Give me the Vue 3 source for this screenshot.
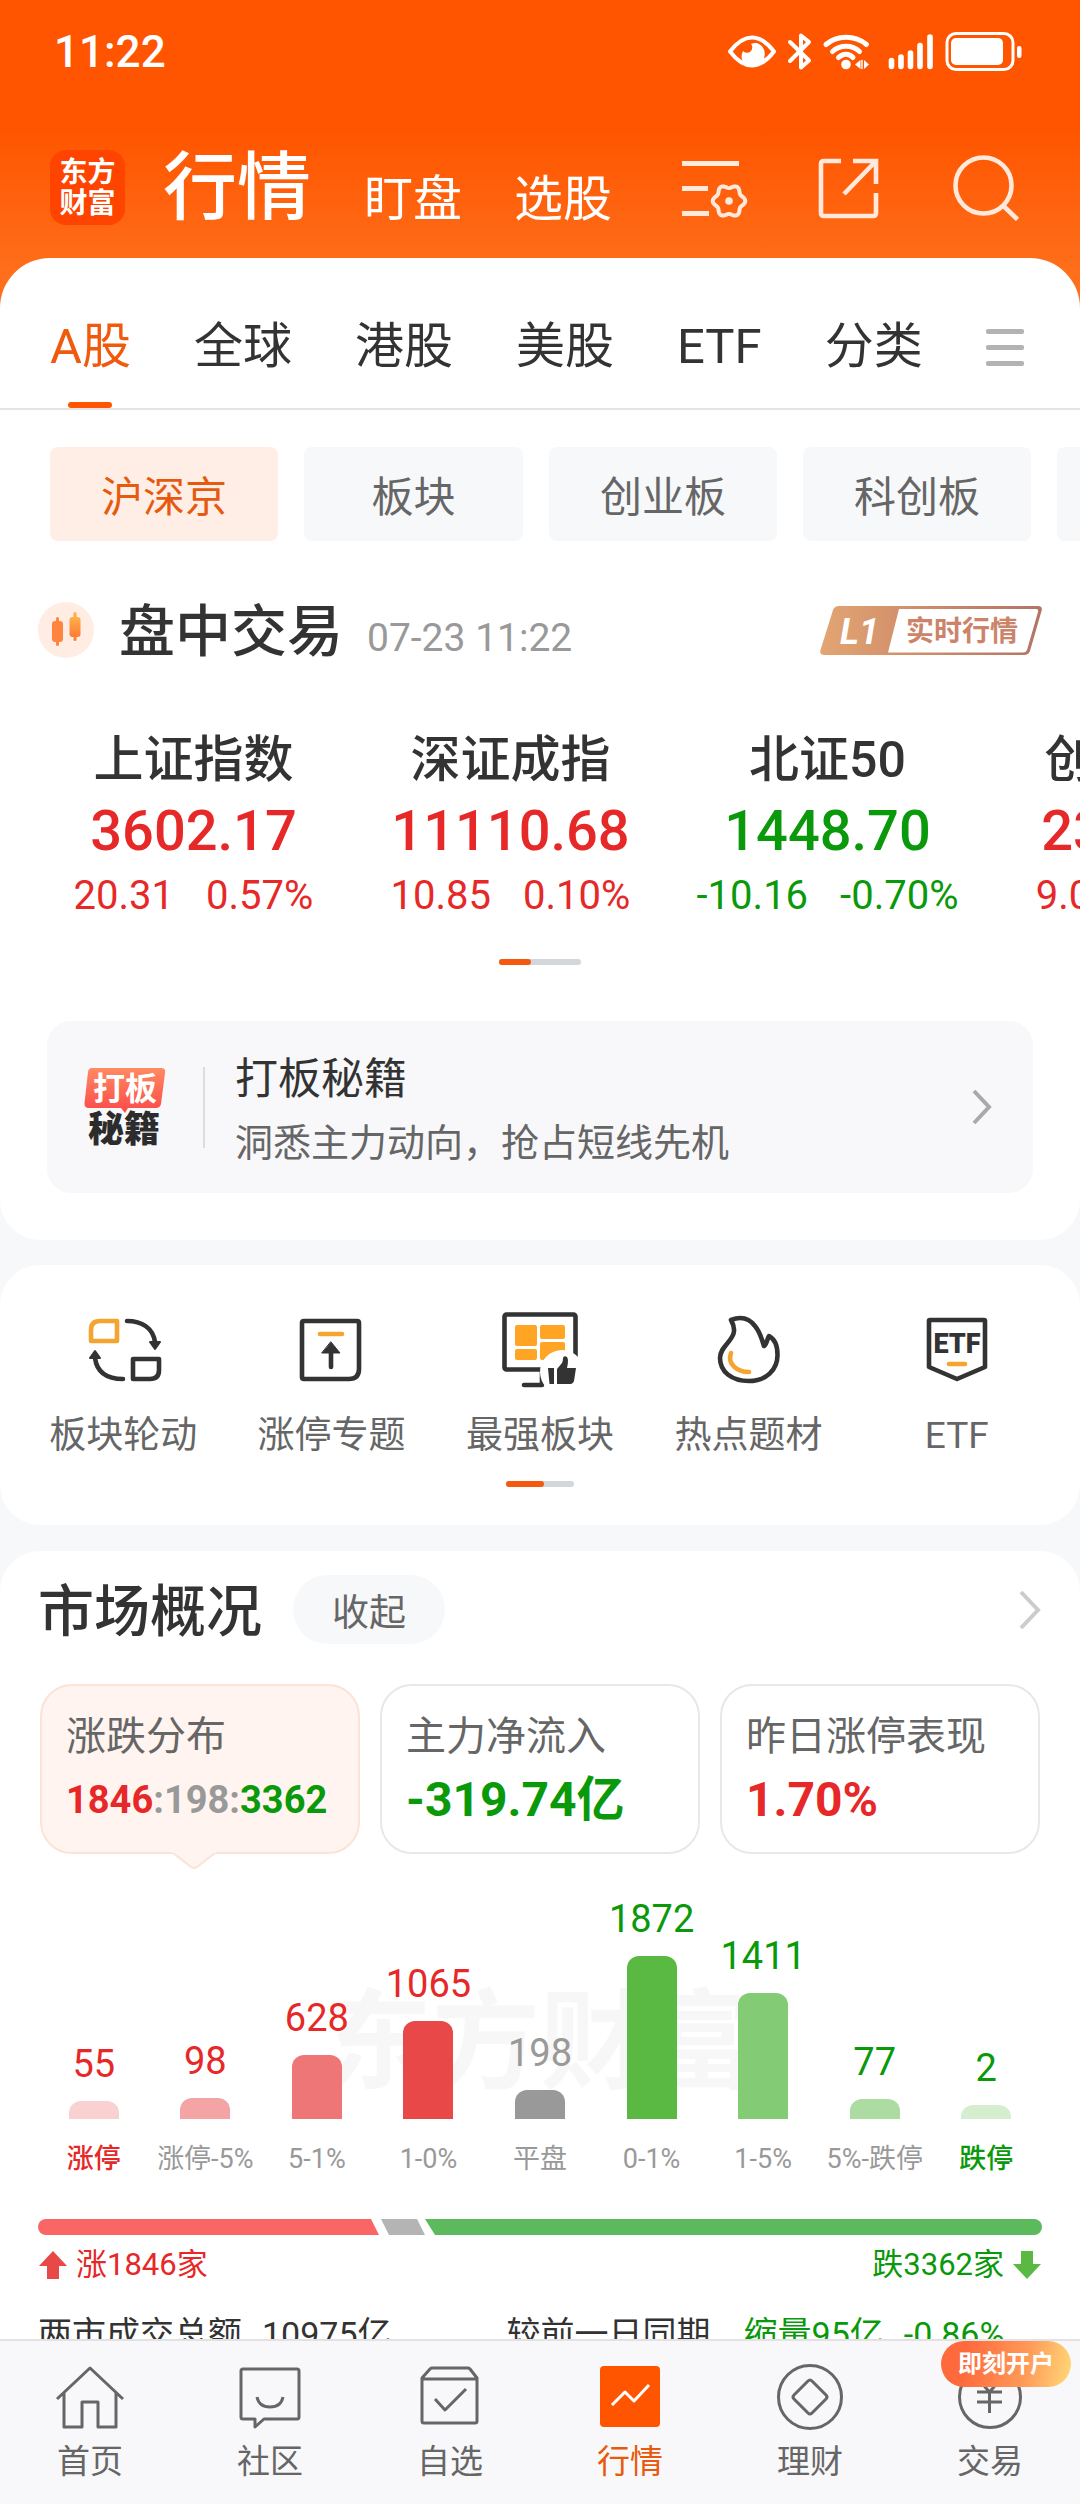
<script setup>
import { ref } from 'vue'

const tabs = ['A股', '全球', '港股', '美股', 'ETF', '分类']
const activeTab = ref('A股')

const boards = ['沪深京', '板块', '创业板', '科创板', '北交所']
const activeBoard = ref('沪深京')

const indices = [
  { name: '上证指数', value: '3602.17', diff: '20.31', pct: '0.57%', dir: 'up' },
  { name: '深证成指', value: '11110.68', diff: '10.85', pct: '0.10%', dir: 'up' },
  { name: '北证50', value: '1448.70', diff: '-10.16', pct: '-0.70%', dir: 'down' },
  { name: '创业板指', value: '2319.92', diff: '9.05', pct: '0.39%', dir: 'up' },
]

const shortcuts = [
  { id: 'rotate', label: '板块轮动' },
  { id: 'limit', label: '涨停专题' },
  { id: 'strong', label: '最强板块' },
  { id: 'hot', label: '热点题材' },
  { id: 'etf', label: 'ETF' },
]

const bars = [
  { label: '涨停', count: 55, height: 18, color: '#f9d1d1', tone: 'up', strong: true },
  { label: '涨停-5%', count: 98, height: 21, color: '#f4a4a4', tone: 'up' },
  { label: '5-1%', count: 628, height: 64, color: '#ee7676', tone: 'up' },
  { label: '1-0%', count: 1065, height: 98, color: '#e84848', tone: 'up' },
  { label: '平盘', count: 198, height: 29, color: '#999999', tone: 'flat' },
  { label: '0-1%', count: 1872, height: 163, color: '#5ab943', tone: 'down' },
  { label: '1-5%', count: 1411, height: 126, color: '#83cb75', tone: 'down' },
  { label: '5%-跌停', count: 77, height: 20, color: '#acdca1', tone: 'down' },
  { label: '跌停', count: 2, height: 14, color: '#d5eed0', tone: 'down', strong: true },
]

const navItems = [
  { id: 'home', label: '首页' },
  { id: 'community', label: '社区' },
  { id: 'watch', label: '自选' },
  { id: 'market', label: '行情' },
  { id: 'wealth', label: '理财' },
  { id: 'trade', label: '交易' },
]
const activeNav = ref('market')

// Six-lobed gear outline centred on (cx, cy)
function gearPath(cx, cy, radius, wave) {
  const points = []
  for (let a = 0; a < 360; a += 6) {
    const t = (a * Math.PI) / 180
    const r = radius + wave * Math.cos(6 * t)
    points.push(`${(cx + r * Math.cos(t)).toFixed(2)} ${(cy + r * Math.sin(t)).toFixed(2)}`)
  }
  return `M${points.join('L')}Z`
}
const gear = gearPath(47, 46, 14.6, 1.7)
</script>

<template>
  <div class="app">
    <header class="header">
      <div class="status">
        <span class="time">11:22</span>
        <svg class="status-icons" width="294" height="40" viewBox="0 0 294 40" fill="none" stroke="#fff" stroke-linecap="round" stroke-linejoin="round" aria-hidden="true">
          <path d="M2 19.5C10 9 17 5.500 24 5.500S38 9 46 19.500C38 30 31 33.500 24 33.500S10 30 2 19.500Z" stroke-width="4" />
          <path d="M15 19a5 5 0 0 0 8-7 10 10 0 0 1 6-1 12 12 0 0 1 1 22H17A12 12 0 0 1 15 19Z" fill="#fff" stroke="none" />
          <path d="M62 10L81 28.500L73 35.500V3.500L81 10L62 29" stroke-width="4" />
          <path d="M98 12.500C109 2.800 127 2.800 138.500 12.500M104.500 19.500C112 12.500 124 12.500 131.500 19.500M110.500 25.500C115 21 121 21 125 25.500" stroke-width="5" />
          <circle cx="118" cy="32.500" r="4.800" fill="#fff" stroke="none" />
          <path d="M127 32.500L132.500 28V37ZM141 32.500L136 28V37Z" fill="#fff" stroke="none" />
          <path d="M134 28.500V36.500" stroke-width="1.500" />
          <path d="M163.500 28.500V34.500M173 25V34.500M182.500 21V34.500M192 13.500V34.500M202 5V34.500" stroke-width="5.600" />
          <rect x="219" y="1.500" width="66" height="36" rx="9" stroke-width="3" />
          <rect x="223" y="6" width="52" height="27" rx="5" fill="#fff" stroke="none" />
          <rect x="289" y="14" width="4.500" height="12" rx="2.200" fill="#fff" stroke="none" />
        </svg>
      </div>
      <div class="topbar">
        <div class="logo"><span>东方</span><span>财富</span></div>
        <h1 class="page-title">行情</h1>
        <nav class="top-links">
          <a href="#watch">盯盘</a>
          <a href="#pick">选股</a>
        </nav>
        <div class="actions">
          <button type="button" aria-label="列表设置">
            <svg width="68" height="66" viewBox="-2 0 68 66" fill="none" stroke="#ffe8dc" stroke-width="4.800">
              <path d="M0 8.500H57M0 33.500H26M0 58.500H27" />
              <path :d="gear" stroke-width="4" stroke-linejoin="round" />
              <circle cx="47" cy="46" r="3.800" fill="#ffe8dc" stroke="none" />
            </svg>
          </button>
          <button type="button" aria-label="分享">
            <svg width="68" height="66" viewBox="0 0 68 66" fill="none" stroke="#ffe8dc" stroke-width="4.600">
              <path d="M25 6H7.500a2.500 2.500 0 0 0-2.500 2.500V58.500a2.500 2.500 0 0 0 2.500 2.500H57.500a2.500 2.500 0 0 0 2.500-2.500V38" />
              <path d="M37 6H60V29M60 6L28 39" />
            </svg>
          </button>
          <button type="button" aria-label="搜索">
            <svg width="68" height="66" viewBox="0 0 68 66" fill="none" stroke="#ffe8dc" stroke-width="4.600">
              <circle cx="31.500" cy="30.500" r="28" />
              <path d="M51 50.500L65.500 64.500" />
            </svg>
          </button>
        </div>
      </div>
    </header>

    <main class="content">
      <section class="sheet">
        <nav class="tabs">
          <button v-for="t in tabs" :key="t" type="button" class="tab" :class="{ active: t === activeTab }" @click="activeTab = t">{{ t }}</button>
          <button type="button" class="menu" aria-label="更多分类"><i></i><i></i><i></i></button>
        </nav>

        <div class="chips">
          <button v-for="b in boards" :key="b" type="button" class="chip" :class="{ active: b === activeBoard }" @click="activeBoard = b">{{ b }}</button>
        </div>

        <div class="session">
          <svg width="56" height="56" viewBox="0 0 56 56" aria-hidden="true">
            <defs>
              <linearGradient id="candle" x1="0" y1="0" x2="0" y2="1">
                <stop offset="0" stop-color="#ffb04a" />
                <stop offset="1" stop-color="#ff7a35" />
              </linearGradient>
            </defs>
            <circle cx="28" cy="28" r="28" fill="#ffece3" />
            <g fill="#ff8440">
              <rect x="18" y="15" width="3" height="29" rx="1.500" />
              <rect x="14" y="19" width="11" height="21" rx="3" />
            </g>
            <g fill="url(#candle)">
              <rect x="35.500" y="10" width="3" height="29" rx="1.500" />
              <rect x="31.500" y="15" width="11" height="20" rx="3" />
            </g>
          </svg>
          <h2 class="heading">盘中交易</h2>
          <time class="date">07-23 11:22</time>
          <a href="#level1" class="level">
            <svg width="222" height="51" viewBox="0 0 222 51">
              <defs>
                <linearGradient id="bronze" x1="0" y1="0" x2="1" y2="0">
                  <stop offset="0" stop-color="#e3a573" />
                  <stop offset="0.400" stop-color="#d18f6b" />
                  <stop offset="1" stop-color="#b27466" />
                </linearGradient>
              </defs>
              <path d="M19 1H218Q223 1 221.500 6L210 46Q208.500 50 204 50H5Q-1 50 .5 45L13 5Q14.500 1 19 1Z" fill="url(#bronze)" />
              <path d="M79 4H216Q219 4 218 7L207 45Q206 47.500 203 47.500H68Z" fill="#fff" />
              <text x="20" y="39" class="level-mark">L1</text>
              <text x="86" y="36" class="level-text">实时行情</text>
            </svg>
          </a>
        </div>

        <div class="indices">
          <a v-for="i in indices" :key="i.name" href="#index" class="index" :class="i.dir">
            <span class="index-name">{{ i.name }}</span>
            <span class="index-value">{{ i.value }}</span>
            <span class="index-change"><span>{{ i.diff }}</span><span>{{ i.pct }}</span></span>
          </a>
        </div>
        <div class="pager pager-wide"><i></i></div>

        <a href="#guide" class="promo">
          <svg width="84" height="80" viewBox="0 0 84 80">
            <defs>
              <linearGradient id="promo" x1="0" y1="0" x2="0" y2="1">
                <stop offset="0" stop-color="#ff8a63" />
                <stop offset="1" stop-color="#fb4a48" />
              </linearGradient>
            </defs>
            <path d="M8 1H77Q82 1 81 6L77 37Q76 41 72 41H44L41 46L37 41H5Q0 41 .5 36L4 5Q4.500 1 8 1Z" fill="url(#promo)" />
            <text x="9" y="33" class="promo-top">打板</text>
            <text x="4" y="75" class="promo-bottom">秘籍</text>
          </svg>
          <span class="promo-body">
            <strong>打板秘籍</strong>
            <span>洞悉主力动向，抢占短线先机</span>
          </span>
          <svg class="chevron" width="22" height="38" viewBox="0 0 22 38" fill="none" stroke="#a9a9a9" stroke-width="4"><path d="M3 3L18 19L3 35" /></svg>
        </a>
      </section>

      <section class="card shortcuts-card">
        <div class="shortcuts">
          <a v-for="s in shortcuts" :key="s.id" href="#shortcut" class="shortcut">
            <svg width="84" height="84" viewBox="0 0 84 84" fill="none" stroke="#333" stroke-width="4.600" stroke-linecap="round" stroke-linejoin="round">
              <g v-if="s.id === 'rotate'">
                <path d="M10 33V22Q10 13 19 13H36V33Z" stroke="#f5a52f" />
                <path d="M52 51H78V62Q78 71 69 71H52Z" />
                <path d="M46 13C61 13 72 20 74 34M42 71C27 71 16 65 14 50" />
                <path d="M69 34H79L74 41ZM9 50H19L14 43Z" fill="#333" stroke-width="2" />
              </g>
              <g v-else-if="s.id === 'limit'">
                <path d="M14 13H67Q69 13 69 15V61Q69 71 59 71H14Q12 71 12 69V15Q12 13 14 13Z" />
                <path d="M30 26H52" stroke="#f5a52f" />
                <path d="M41 59V42" />
                <path d="M41 34L50 45H32Z" fill="#333" stroke-width="1" />
              </g>
              <g v-else-if="s.id === 'strong'">
                <rect x="6.500" y="6.500" width="71" height="55" rx="2" />
                <g fill="#ffa423" stroke="none">
                  <rect x="17" y="17" width="22" height="21" rx="2" />
                  <rect x="42" y="17" width="25" height="14" rx="2" />
                  <rect x="17" y="41" width="22" height="11" rx="2" />
                  <rect x="42" y="34" width="25" height="18" rx="2" />
                </g>
                <path d="M26 77H44V63" />
                <circle cx="64" cy="64" r="22" fill="#fff" stroke="none" />
                <path d="M50 60H56V76H51.500ZM59 61L64 55Q65 53 65 50Q66 47 69 49Q71 52 69 60H78L76 73Q75 76 73 76H59Z" fill="#333" stroke="none" />
              </g>
              <g v-else-if="s.id === 'hot'">
                <path d="M25 12C35 8 43 10 49 18C54 24 56 31 58 38C61 36 61 31 63 28C69 31 71.500 39 71.500 47C71.500 62 60 73 43 73C26 73 14 64 14 50C14 35 36 31 25 12Z" />
                <path d="M25 45C21 56 31 64 43 64" stroke="#f5a52f" />
              </g>
              <g v-else>
                <path d="M15 12H69Q70 12 70 13V59L42 71L14 59V13Q14 12 15 12Z" />
                <path d="M34 56H50" stroke="#f5a52f" />
                <text x="42" y="45" class="etf-text">ETF</text>
              </g>
            </svg>
            <span>{{ s.label }}</span>
          </a>
        </div>
        <div class="pager"><i></i></div>
      </section>

      <section class="card market">
        <div class="market-head">
          <h2 class="heading">市场概况</h2>
          <button type="button" class="collapse">收起</button>
          <a href="#market" class="more" aria-label="更多">
            <svg width="24" height="42" viewBox="0 0 24 42" fill="none" stroke="#ccc" stroke-width="4"><path d="M3 3L20 21L3 39" /></svg>
          </a>
        </div>

        <div class="stats">
          <button type="button" class="stat selected">
            <span class="stat-label">涨跌分布</span>
            <span class="ratio"><b class="up">1846</b><b class="flat">:198:</b><b class="down">3362</b></span>
            <svg class="pointer" width="44" height="18" viewBox="0 0 44 18"><path d="M1 1L19 15Q22 17 25 15L43 1" fill="#fff4ef" stroke="#fbe3d7" stroke-width="2" /><path d="M0 0H44V1H0Z" fill="#fff4ef" /></svg>
          </button>
          <button type="button" class="stat">
            <span class="stat-label">主力净流入</span>
            <span class="stat-value down">-319.74亿</span>
          </button>
          <button type="button" class="stat">
            <span class="stat-label">昨日涨停表现</span>
            <span class="stat-value up">1.70%</span>
          </button>
        </div>

        <div class="chart">
          <div class="watermark" aria-hidden="true">东方财富</div>
          <div v-for="b in bars" :key="b.label" class="column">
            <span class="count" :class="b.tone">{{ b.count }}</span>
            <span class="bar" :style="{ height: b.height + 'px', background: b.color }"></span>
          </div>
        </div>
        <div class="axis">
          <span v-for="b in bars" :key="b.label" :class="b.strong ? ['strong', b.tone] : ''">{{ b.label }}</span>
        </div>

        <div class="breadth"><i class="rise"></i><i class="even"></i><i class="fall"></i></div>
        <div class="legend">
          <span class="up">
            <svg width="28" height="28" viewBox="0 0 28 28" fill="#e84848"><path d="M14 0L28 15H20V28H8V15H0Z" /></svg>涨1846家
          </span>
          <span class="down">
            跌3362家<svg width="28" height="28" viewBox="0 0 28 28" fill="#5ab943"><path d="M14 28L28 13H20V0H8V13H0Z" /></svg>
          </span>
        </div>

        <div class="turnover">
          <div class="pair"><span>两市成交总额</span><span>10975亿</span></div>
          <div class="pair compare"><span>较前一日同期</span><span class="down pair"><span>缩量95亿</span><span>-0.86%</span></span></div>
        </div>
      </section>
    </main>

    <nav class="bottom-nav">
      <a v-for="n in navItems" :key="n.id" href="#nav" class="nav-item" :class="{ active: n.id === activeNav }" @click.prevent="activeNav = n.id">
        <svg width="72" height="72" viewBox="0 0 72 72" fill="none" stroke="#666" stroke-width="3" stroke-linejoin="round">
          <path v-if="n.id === 'home'" d="M3 38L36 7L69 38M10 32V66H28V41H44V66H62V32" />
          <g v-else-if="n.id === 'community'">
            <path d="M9 8H63Q65 8 65 10V56Q65 58 63 58H30L21 66V58H9Q7 58 7 56V10Q7 8 9 8Z" />
            <path d="M23 36Q25 46 36 46T49 36" />
          </g>
          <g v-else-if="n.id === 'watch'">
            <path d="M8 17L16 8Q17 7 18 7H54Q55 7 56 8L63 17V60Q63 62 61 62H10Q8 62 8 60ZM8 18H63" />
            <path d="M21 38L31 49L52 28" />
          </g>
          <g v-else-if="n.id === 'market'">
            <rect x="6" y="5" width="60" height="61" rx="4" fill="#ff5500" stroke="none" />
            <path d="M18 44L31 31L40 40L55 24" stroke="#fff" />
          </g>
          <g v-else-if="n.id === 'wealth'">
            <circle cx="36" cy="36" r="31.500" />
            <path d="M34 20Q36 18 38 20L52 34Q54 36 52 38L38 52Q36 54 34 52L20 38Q18 36 20 34Z" />
          </g>
          <g v-else>
            <circle cx="36" cy="36" r="30.500" />
            <path d="M25 19L35.500 31L46 19M23 31H48M23 41H48M35.500 31V52" />
          </g>
        </svg>
        <span>{{ n.label }}</span>
        <em v-if="n.id === 'trade'" class="promo-tag">即刻开户</em>
      </a>
    </nav>
  </div>
</template>

<style>
body {
  margin: 0;
  background: #f7f8fa;
}
</style>

<style scoped>
.app {
  font-family: Roboto, 'Noto Sans CJK SC', sans-serif;
  color: #333;
  overflow: hidden;
}
.app * {
  box-sizing: border-box;
}
button {
  font: inherit;
  color: inherit;
  border: 0;
  padding: 0;
  background: none;
}
a {
  color: inherit;
  text-decoration: none;
}
svg {
  display: block;
  flex: none;
}
h1,
h2 {
  margin: 0;
}
.up {
  color: #e62828;
}
.down {
  color: #0a990a;
}
.flat {
  color: #999;
}

.header {
  padding-bottom: 83px;
  background: linear-gradient(#ff5500 130px, #ff6e1a 270px);
  color: #fff;
}
.status {
  display: flex;
  align-items: center;
  justify-content: space-between;
  height: 104px;
  padding: 0 58px 0 54px;
}
.time {
  font-size: 44px;
  font-weight: 500;
}
.topbar {
  display: flex;
  align-items: center;
  height: 75px;
  margin-top: 46px;
  padding: 0 60px 0 50px;
}
.logo {
  display: flex;
  flex-direction: column;
  align-items: center;
  justify-content: center;
  width: 75px;
  height: 75px;
  border-radius: 16px;
  background: #ff4400;
  font-size: 28px;
  font-weight: 700;
  line-height: 31px;
}
.page-title {
  margin-left: 38px;
  font-size: 74px;
  font-weight: 500;
  line-height: 78px;
}
.top-links {
  display: flex;
  gap: 52px;
  margin-left: 53px;
  padding-top: 24px;
  font-size: 49px;
  line-height: 53px;
}
.actions {
  display: flex;
  gap: 68px;
  margin-left: auto;
}

.sheet {
  margin-top: -50px;
  padding-bottom: 47px;
  border-radius: 50px 50px 40px 40px;
  background: #fff;
  overflow: hidden;
}
.tabs {
  display: flex;
  align-items: center;
  gap: 63px;
  padding: 54px 56px 26px 50px;
  border-bottom: 2px solid #e4e4e4;
}
.tab {
  position: relative;
  flex: none;
  font-size: 49px;
  line-height: 70px;
  white-space: nowrap;
}
.tab.active {
  color: #f05a0c;
}
.tab.active::after {
  content: '';
  position: absolute;
  left: 50%;
  bottom: -26px;
  width: 44px;
  height: 6px;
  margin-left: -22px;
  border-radius: 3px;
  background: #ff5500;
}
.menu {
  display: flex;
  flex: none;
  flex-direction: column;
  gap: 11px;
  margin-left: auto;
}
.menu i {
  width: 38px;
  height: 5px;
  border-radius: 2px;
  background: #b3b3b3;
}

.chips {
  display: flex;
  gap: 26px;
  margin-top: 37px;
  padding-left: 50px;
  overflow: hidden;
}
.chip {
  flex: none;
  min-width: 219px;
  height: 94px;
  padding: 0 51px 2px;
  border-radius: 8px;
  background: #f7f8fa;
  color: #666;
  font-size: 42px;
  white-space: nowrap;
}
.chip.active {
  background: #ffeee6;
  color: #e65a10;
}

.session {
  display: flex;
  align-items: center;
  height: 56px;
  margin-top: 61px;
  padding: 0 38px;
}
.heading {
  padding-top: 4px;
  font-size: 56px;
  font-weight: 500;
  line-height: 56px;
}
.session .heading {
  margin-left: 25px;
}
.date {
  margin-left: 24px;
  padding-top: 16px;
  color: #999;
  font-size: 39px;
  line-height: 40px;
}
.level {
  margin-left: auto;
}
.level-mark {
  fill: #fff;
  font-size: 36px;
  font-style: italic;
  font-weight: 700;
}
.level-text {
  fill: #cb8469;
  font-size: 28px;
  font-weight: 700;
}

.indices {
  display: flex;
  margin-top: 72px;
  padding-left: 35px;
  overflow: hidden;
}
.index {
  display: flex;
  flex: 0 0 317px;
  flex-direction: column;
  align-items: center;
}
.index-name {
  color: #333;
  font-size: 50px;
  font-weight: 500;
  line-height: 60px;
}
.index-value {
  margin-top: 11px;
  font-size: 56px;
  font-weight: 500;
  line-height: 60px;
}
.index-change {
  display: flex;
  gap: 32px;
  margin-top: 10px;
  font-size: 40px;
  line-height: 50px;
}
.pager {
  width: 68px;
  height: 6px;
  margin: 20px auto 0;
  border-radius: 3px;
  background: #d3d6da;
}
.pager i {
  display: block;
  width: 38px;
  height: 6px;
  border-radius: 3px;
  background: #f5590f;
}
.pager-wide {
  width: 82px;
  margin-top: 38px;
}
.pager-wide i {
  width: 32px;
}

.promo {
  display: flex;
  align-items: center;
  height: 172px;
  margin: 56px 47px 0;
  padding: 0 40px 0 37px;
  border-radius: 24px;
  background: #f8f8fa;
}
.promo-top {
  fill: #fff;
  font-size: 32px;
  font-weight: 700;
}
.promo-bottom {
  fill: #2c2c2c;
  font-size: 36px;
  font-weight: 900;
}
.promo-body {
  display: flex;
  flex-direction: column;
  justify-content: center;
  gap: 8px;
  height: 81px;
  margin-left: 35px;
  padding-top: 8px;
  padding-left: 30px;
  border-left: 2px solid #dcdcdc;
}
.promo-body strong {
  font-size: 43px;
  font-weight: 400;
  line-height: 56px;
}
.promo-body span {
  color: #666;
  font-size: 38px;
  line-height: 56px;
}
.chevron {
  margin-left: auto;
}

.card {
  border-radius: 40px;
  background: #fff;
}
.shortcuts-card {
  margin-top: 25px;
  padding: 43px 0 38px;
}
.shortcuts {
  display: flex;
  padding: 0 19px;
}
.shortcut {
  display: flex;
  flex: 1;
  flex-direction: column;
  align-items: center;
  gap: 19px;
  color: #666;
  font-size: 37px;
  line-height: 50px;
}
.etf-text {
  fill: #333;
  stroke: none;
  font-size: 27px;
  font-weight: 900;
  text-anchor: middle;
}

.market {
  margin-top: 26px;
  padding: 24px 38px 144px;
  border-radius: 40px 40px 0 0;
}
.market-head {
  display: flex;
  align-items: center;
  height: 69px;
}
.collapse {
  width: 152px;
  height: 69px;
  margin-left: 31px;
  border-radius: 35px;
  background: #f7f8fa;
  color: #666;
  font-size: 37px;
}
.more {
  margin-left: auto;
}
.stats {
  display: grid;
  grid-template-columns: repeat(3, 1fr);
  gap: 20px;
  margin: 40px 2px 0;
}
.stat {
  position: relative;
  display: flex;
  flex-direction: column;
  align-items: flex-start;
  gap: 7px;
  height: 170px;
  padding: 25px 24px 0;
  border: 2px solid #e8e8e8;
  border-radius: 32px;
}
.stat.selected {
  border-color: #fbe3d7;
  background: #fff4ef;
}
.stat-label {
  color: #666;
  font-size: 40px;
  line-height: 52px;
}
.ratio {
  font-size: 38px;
  line-height: 60px;
}
.stat-value {
  font-size: 48px;
  font-weight: 700;
  line-height: 60px;
}
.pointer {
  position: absolute;
  top: 166px;
  left: 130px;
}

.chart {
  position: relative;
  display: flex;
  align-items: flex-end;
  height: 265px;
}
.column {
  position: relative;
  display: flex;
  flex: 1;
  flex-direction: column;
  align-items: center;
}
.count {
  margin-bottom: 15px;
  font-size: 38px;
  line-height: 44px;
}
.bar {
  width: 50px;
  border-radius: 12px 12px 0 0;
}
.watermark {
  position: absolute;
  left: 0;
  right: 0;
  bottom: 16px;
  color: #f7f7f7;
  font-size: 108px;
  font-weight: 700;
  line-height: 120px;
  text-align: center;
}
.axis {
  display: flex;
  margin-top: 20px;
  color: #999;
  font-size: 27px;
  line-height: 40px;
}
.axis span {
  flex: 1;
  text-align: center;
  white-space: nowrap;
}
.axis .strong {
  font-weight: 500;
}
.axis .up {
  color: #e62828;
}
.axis .down {
  color: #0a990a;
}

.breadth {
  display: flex;
  height: 16px;
  margin-top: 40px;
  border-radius: 8px;
  overflow: hidden;
}
.breadth .rise {
  flex: 341;
  background: #f96665;
  clip-path: polygon(0 0, calc(100% - 8px) 0, 100% 100%, 0 100%);
}
.breadth .even {
  width: 44px;
  margin-left: 2px;
  background: #b4b4b4;
  clip-path: polygon(0 0, calc(100% - 8px) 0, 100% 100%, 8px 100%);
}
.breadth .fall {
  flex: 617;
  background: #5cb95c;
  clip-path: polygon(0 0, 100% 0, 100% 100%, 10px 100%);
}
.legend {
  display: flex;
  justify-content: space-between;
  margin-top: 10px;
  font-size: 31px;
  line-height: 40px;
}
.legend span {
  display: flex;
  align-items: center;
  gap: 9px;
  padding: 0 1px;
}
.turnover {
  display: grid;
  grid-template-columns: 7fr 8fr;
  margin-top: 24px;
  font-size: 34px;
  line-height: 50px;
}
.pair {
  display: flex;
  gap: 20px;
}
.compare {
  gap: 33px;
}

.bottom-nav {
  position: fixed;
  right: 0;
  bottom: 0;
  left: 0;
  display: flex;
  height: 165px;
  border-top: 2px solid #e2e2e4;
  background: #f8f8fa;
}
.nav-item {
  position: relative;
  display: flex;
  flex: 1;
  flex-direction: column;
  align-items: center;
  gap: 9px;
  padding-top: 20px;
  color: #666;
  font-size: 33px;
  line-height: 40px;
}
.nav-item.active {
  color: #e8590c;
}
.promo-tag {
  position: absolute;
  top: 0;
  right: 9px;
  width: 130px;
  border-radius: 23px;
  background: linear-gradient(100deg, #ff6a3c 20%, #ff9a58 65%, #ffd978);
  color: #fff;
  font-size: 24px;
  font-style: normal;
  font-weight: 700;
  line-height: 46px;
  text-align: center;
}
</style>
